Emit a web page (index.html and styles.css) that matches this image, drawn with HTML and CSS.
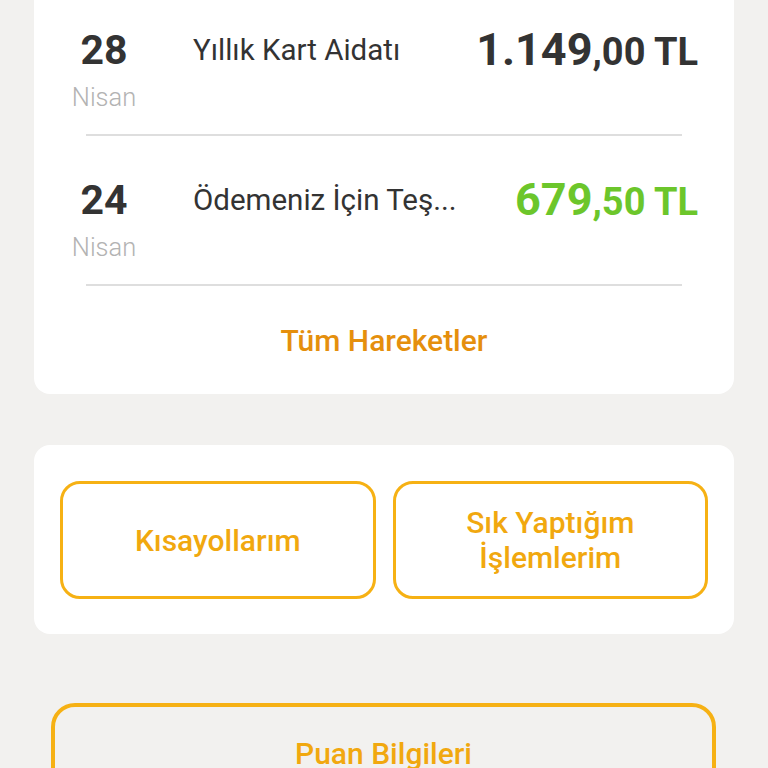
FILE: index.html
```html
<!DOCTYPE html>
<html lang="tr">
<head>
<meta charset="utf-8">
<link rel="stylesheet" href="styles.css">
</head>
<body>
<div class="page">
  <section class="card tx-card">
    <div class="tx-row">
      <div class="tx-date">
        <span class="day">28</span>
        <span class="month">Nisan</span>
      </div>
      <div class="tx-desc">Yıllık Kart Aidatı</div>
      <div class="tx-amount"><span class="big">1.149</span><span class="small">,00 TL</span></div>
    </div>
    <div class="divider"></div>
    <div class="tx-row">
      <div class="tx-date">
        <span class="day">24</span>
        <span class="month">Nisan</span>
      </div>
      <div class="tx-desc">Ödemeniz İçin Teş...</div>
      <div class="tx-amount positive"><span class="big">679</span><span class="small">,50 TL</span></div>
    </div>
    <div class="divider"></div>
    <div class="all-link">Tüm Hareketler</div>
  </section>

  <section class="card shortcuts">
    <div class="outline-btn">Kısayollarım</div>
    <div class="outline-btn">Sık Yaptığım<br>İşlemlerim</div>
  </section>

  <div class="outline-btn wide-btn">Puan Bilgileri</div>
</div>
</body>
</html>
```

FILE: styles.css
```css
* { box-sizing: border-box; }
html, body {
  margin: 0;
  padding: 0;
  background: #f2f1ef;
  font-family: Roboto, "Noto Sans", "Liberation Sans", sans-serif;
  color: #333333;
}
body { overflow: hidden; }
.page {
  width: 768px;
  padding: 0 34px;
}
.card {
  background: #ffffff;
  border-radius: 16px;
}
.tx-card {
  margin-top: -14px;
  border-radius: 0 0 16px 16px;
}
.tx-row {
  display: flex;
  align-items: flex-start;
  padding: 40px 36px 23px 34px;
}
.tx-date {
  width: 72px;
  display: flex;
  flex-direction: column;
  align-items: center;
}
.day {
  font-size: 41px;
  font-weight: 700;
  line-height: 48px;
  color: #333333;
}
.month {
  margin-top: 9px;
  font-size: 25.5px;
  font-weight: 300;
  line-height: 28px;
  color: #b3b3b3;
}
.tx-desc {
  margin-left: 53px;
  flex: 1;
  font-size: 29.5px;
  line-height: 48px;
  color: #333333;
  white-space: nowrap;
}
.tx-amount {
  line-height: 48px;
  font-weight: 700;
  color: #333333;
  white-space: nowrap;
}
.tx-amount .big { font-size: 45px; }
.tx-amount .small { font-size: 38px; }
.tx-amount.positive { color: #6cc62b; }
.divider {
  height: 2px;
  margin: 0 52px;
  background: #dedede;
}
.all-link {
  padding: 40px 0 38px;
  text-align: center;
  font-size: 30px;
  line-height: 30px;
  font-weight: 500;
  color: #e58f0d;
}
.shortcuts {
  margin-top: 51px;
  padding: 36px 26px 35px;
  display: grid;
  grid-template-columns: 1fr 1fr;
  gap: 17px;
}
.outline-btn {
  border: 3.5px solid #f6b114;
  border-radius: 20px;
  height: 118px;
  font-size: 30px;
  line-height: 35px;
  font-weight: 500;
  color: #f1a80f;
  text-align: center;
  display: flex;
  align-items: center;
  justify-content: center;
}
.wide-btn {
  width: 665px;
  margin: 69px 0 0 17px;
  height: 120px;
  border-width: 4px;
  border-radius: 24px;
  align-items: flex-start;
  padding-top: 32px;
  line-height: 30px;
}
```
